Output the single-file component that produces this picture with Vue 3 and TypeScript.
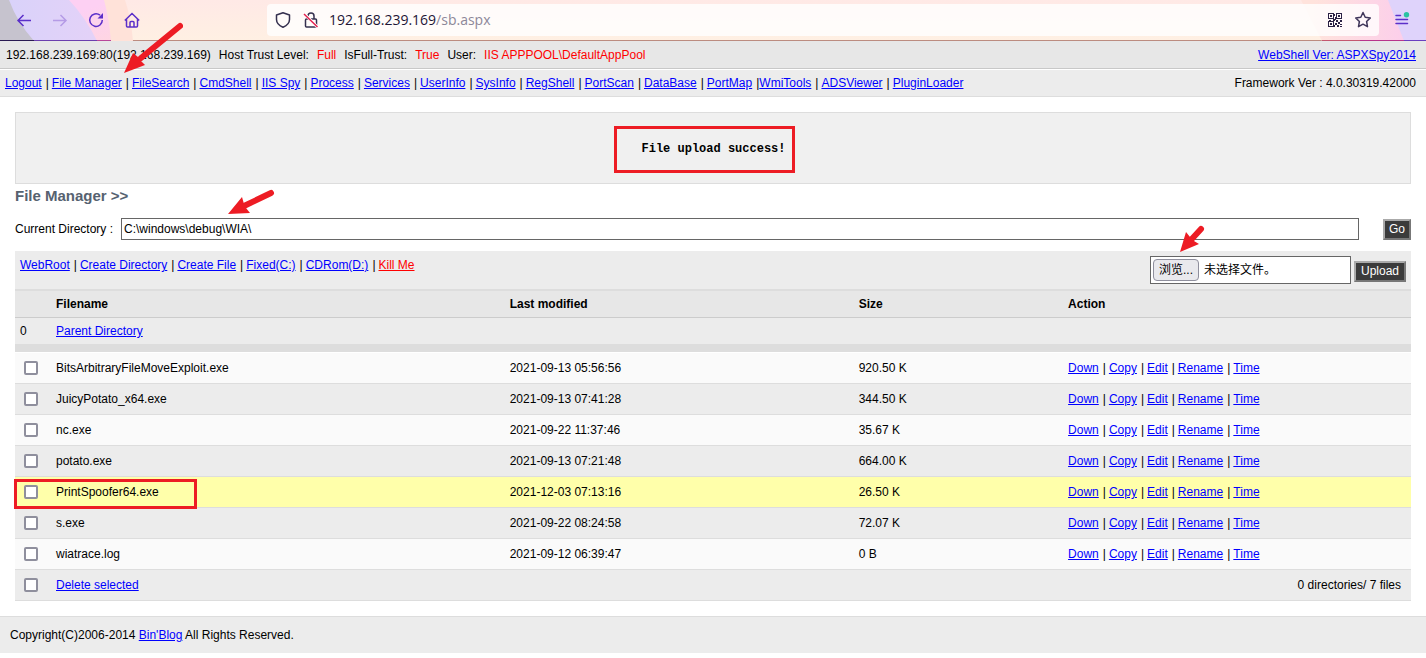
<script setup lang="ts">
import { ref } from 'vue'

interface FileRow {
  name: string
  modified: string
  size: string
  marked?: boolean
}

const menu: string[] = [
  'Logout', 'File Manager', 'FileSearch', 'CmdShell', 'IIS Spy', 'Process', 'Services', 'UserInfo',
  'SysInfo', 'RegShell', 'PortScan', 'DataBase', 'PortMap', 'WmiTools', 'ADSViewer', 'PluginLoader',
]
const shortcuts: string[] = ['WebRoot', 'Create Directory', 'Create File', 'Fixed(C:)', 'CDRom(D:)', 'Kill Me']
const actions: string[] = ['Down', 'Copy', 'Edit', 'Rename', 'Time']
const files: FileRow[] = [
  { name: 'BitsArbitraryFileMoveExploit.exe', modified: '2021-09-13 05:56:56', size: '920.50 K' },
  { name: 'JuicyPotato_x64.exe', modified: '2021-09-13 07:41:28', size: '344.50 K' },
  { name: 'nc.exe', modified: '2021-09-22 11:37:46', size: '35.67 K' },
  { name: 'potato.exe', modified: '2021-09-13 07:21:48', size: '664.00 K' },
  { name: 'PrintSpoofer64.exe', modified: '2021-12-03 07:13:16', size: '26.50 K', marked: true },
  { name: 's.exe', modified: '2021-09-22 08:24:58', size: '72.07 K' },
  { name: 'wiatrace.log', modified: '2021-09-12 06:39:47', size: '0 B' },
]
const directory = ref('C:\\windows\\debug\\WIA\\')
</script>

<template>
  <div class="page">
    <header class="chrome">
      <svg class="theme theme-left" width="160" height="41" viewBox="0 0 160 41" aria-hidden="true">
        <defs>
          <linearGradient id="lav" x1="0" x2="1"><stop offset="0" stop-color="#d8d2fa" /><stop offset="1" stop-color="#e4d2f8" /></linearGradient>
          <linearGradient id="pink" x1="0" x2="1" y1="0" y2="1"><stop offset="0.5" stop-color="#fdd0f3" /><stop offset="1" stop-color="#ffd6e2" /></linearGradient>
        </defs>
        <path d="M0 0H125Q131 18 133 41H0Z" fill="#ffe2d9" />
        <path d="M0 0H104Q109 18 111 41H0Z" fill="url(#pink)" />
        <path d="M0 0H69Q86 18 97 41H0Z" fill="url(#lav)" />
        <path d="M0 0H9Q17 22 34 41H0Z" fill="#c6c3ce" />
        <path d="M0 40.500H34" stroke="#2a1a52" stroke-width="1" />
        <path d="M34 40.500H97" stroke="#6b3fae" stroke-width="1" />
        <path d="M97 40.500H111" stroke="#b8479a" stroke-width="1" />
      </svg>
      <svg class="theme theme-right" width="136" height="41" viewBox="0 0 136 41" aria-hidden="true">
        <defs>
          <linearGradient id="dusk" x1="0" x2="1"><stop offset="0.100" stop-color="#ffe3dc" /><stop offset="0.800" stop-color="#fccfea" /></linearGradient>
        </defs>
        <path d="M11 0H136V41H32Z" fill="url(#dusk)" />
        <path d="M98 0H136V41H114Z" fill="#dfd3fb" />
        <path d="M32 40.500H70" stroke="#c4576f" stroke-width="1" />
        <path d="M70 40.500H114" stroke="#b8358c" stroke-width="1" />
        <path d="M114 40.500H136" stroke="#6a3fc0" stroke-width="1" />
      </svg>
      <nav class="chrome-nav">
        <button type="button" aria-label="Back">
          <svg width="16" height="16" viewBox="0 0 16 16"><path d="M15 8.500H2M7.500 3L2 8.500l5.500 5.500" stroke="#5b2fc9" /></svg>
        </button>
        <button type="button" aria-label="Forward">
          <svg width="16" height="16" viewBox="0 0 16 16"><path d="M1 8.500h13M8.500 3L14 8.500 8.500 14" stroke="#b59be6" /></svg>
        </button>
        <button type="button" aria-label="Reload">
          <svg width="16" height="16" viewBox="0 0 16 16"><path d="M12 3.200A6.300 6.300 0 1 0 14.300 8" stroke="#5b2fc9" /><path d="M15 1v5.500H9.500z" fill="#5b2fc9" /></svg>
        </button>
        <button type="button" aria-label="Home">
          <svg width="16" height="16" viewBox="0 0 16 16"><path d="M.8 8.500L8 1.500l7.200 7M2.500 7v7a1 1 0 0 0 1 1h9a1 1 0 0 0 1-1V7M6 15v-4.500a1 1 0 0 1 1-1h2a1 1 0 0 1 1 1V15" stroke="#5b2fc9" /></svg>
        </button>
      </nav>
      <div class="address">
        <svg width="16" height="16" viewBox="0 0 16 16" aria-hidden="true"><path d="M8 .8L14.500 3v4.500c0 3.500-2.500 6-6.500 7.800C4 13.500 1.500 11 1.500 7.500V3z" stroke="#35304f" stroke-linejoin="round" /></svg>
        <svg width="16" height="16" viewBox="0 0 16 16" aria-hidden="true"><path d="M5 7V4a3 3 0 0 1 6 0v3M3.500 7h9a1 1 0 0 1 1 1v6a1 1 0 0 1-1 1h-9a1 1 0 0 1-1-1V8a1 1 0 0 1 1-1z" stroke="#35304f" /><path d="M1.500 2L14.500 15" stroke="#fff" stroke-width="3" /><path d="M1 2L14.500 15" stroke="#e2204e" /></svg>
        <p class="url">192.168.239.169<span>/sb.aspx</span></p>
        <button type="button" aria-label="QR code">
          <svg width="14" height="14" viewBox="0 0 14 14" shape-rendering="crispEdges">
            <path d="M.5.5h5v5h-5zM8.500.5h5v5h-5zM.5 8.500h5v5h-5z" stroke="#2b2144" stroke-width="1" />
            <path d="M2 2h2v2H2zM10 2h2v2h-2zM2 10h2v2H2zM6 1h1v2H6zM7 4h1v3H7zM1 7h2v1H1zM5 6h2v2H5zM8 7h2v2H8zM12 7h2v2h-2zM10 9h2v2h-2zM7 10h2v2H7zM12 11h2v1h-2zM9 12h2v2H9zM12 13h2v1h-2zM6 12h1v2H6z" fill="#2b2144" />
          </svg>
        </button>
        <button type="button" aria-label="Bookmark">
          <svg width="18" height="18" viewBox="0 0 18 18"><path d="M9 1.500l2.200 4.700 5.100.7-3.700 3.600.9 5.200L9 13.200l-4.500 2.500.9-5.200L1.700 6.900l5.100-.7z" stroke="#40365a" stroke-linejoin="round" /></svg>
        </button>
      </div>
      <button class="app-menu" type="button" aria-label="Application menu">
        <svg width="16" height="16" viewBox="0 0 16 16"><path d="M2 3.500h4.500M2 7.500h11.500M2 11.500h11.500" stroke="#5b2fc9" stroke-linecap="round" /><circle cx="12.500" cy="2.700" r="2.700" fill="#2ac3a2" /></svg>
      </button>
    </header>

    <div class="bar status">
      <p>
        <span>192.168.239.169:80(192.168.239.169)</span>
        <span>Host Trust Level:</span><em>Full</em>
        <span>IsFull-Trust:</span><em>True</em>
        <span>User:</span><em>IIS APPPOOL\DefaultAppPool</em>
      </p>
      <a href="#">WebShell Ver: ASPXSpy2014</a>
    </div>
    <div class="bar menu">
      <nav class="links">
        <template v-for="(item, i) in menu" :key="item">
          <i v-if="i" :class="{ tight: item === 'WmiTools' }">|</i><a href="#">{{ item }}</a>
        </template>
      </nav>
      <span>Framework Ver : 4.0.30319.42000</span>
      <svg class="arrow arrow-menu" width="62" height="54" viewBox="0 0 62 54" aria-hidden="true">
        <path d="M59 5L20 37" /><polygon points="3,52 12,32 17,36 20,40 24,44" />
      </svg>
    </div>

    <main>
      <div class="message"><strong>File upload success!</strong></div>
      <h2>File Manager &gt;&gt;</h2>
      <form class="directory" @submit.prevent>
        <label for="dir">Current Directory :</label>
        <input id="dir" v-model="directory" type="text">
        <button class="dark go" type="submit">Go</button>
        <svg class="arrow arrow-dir" width="50" height="28" viewBox="0 0 50 28" aria-hidden="true">
          <path d="M45 5L18 18" /><polygon points="2,26 16,9 18,16 20,20 24,25" />
        </svg>
      </form>

      <form class="tools" @submit.prevent>
        <nav class="links">
          <template v-for="(item, i) in shortcuts" :key="item">
            <i v-if="i">|</i><a href="#" :class="{ danger: item === 'Kill Me' }">{{ item }}</a>
          </template>
        </nav>
        <div class="upload">
          <label class="picker">
            <input type="file"><span class="browse">浏览...</span><span>未选择文件。</span>
          </label>
          <button class="dark send" type="submit">Upload</button>
          <svg class="arrow arrow-upload" width="28" height="30" viewBox="0 0 28 30" aria-hidden="true">
            <path d="M23 5L12 17" /><polygon points="2,28 8,8 12,13 16,17 21,20" />
          </svg>
        </div>
      </form>

      <table>
        <colgroup><col class="c-pick"><col class="c-name"><col class="c-date"><col class="c-size"><col></colgroup>
        <thead>
          <tr><th></th><th>Filename</th><th>Last modified</th><th>Size</th><th>Action</th></tr>
        </thead>
        <tbody>
          <tr class="parent"><td>0</td><td colspan="4"><a href="#">Parent Directory</a></td></tr>
          <tr v-for="f in files" :key="f.name" class="file" :class="{ marked: f.marked }">
            <td class="pick"><input type="checkbox" :aria-label="f.name"><span v-if="f.marked" class="frame"></span></td>
            <td>{{ f.name }}</td>
            <td>{{ f.modified }}</td>
            <td>{{ f.size }}</td>
            <td>
              <span class="links">
                <template v-for="(a, i) in actions" :key="a"><i v-if="i">|</i><a href="#">{{ a }}</a></template>
              </span>
            </td>
          </tr>
        </tbody>
        <tfoot>
          <tr>
            <td class="pick"><input type="checkbox" aria-label="Select all"></td>
            <td><a href="#">Delete selected</a></td>
            <td colspan="3" class="total">0 directories/ 7 files</td>
          </tr>
        </tfoot>
      </table>
    </main>

    <footer>Copyright(C)2006-2014 <a href="#">Bin'Blog</a> All Rights Reserved.</footer>
  </div>
</template>

<style>
body {
  margin: 0;
  background: #fff;
}
</style>

<style scoped>
.page {
  font: 12px/18px "Liberation Sans", "Noto Sans CJK SC", sans-serif;
  color: #000;
}
.page * {
  box-sizing: border-box;
}
p,
h2 {
  margin: 0;
}
a {
  color: #00f;
}
button,
input {
  font: inherit;
}
svg {
  display: block;
  fill: none;
  stroke-width: 1.5;
}

.chrome {
  position: relative;
  display: flex;
  align-items: center;
  height: 41px;
  padding: 0 16px;
  background: linear-gradient(#ffe9e6, #fff0e3);
  border-bottom: 1px solid #bc8c80;
}
.chrome button {
  padding: 0;
  border: 0;
  background: none;
}
.theme {
  position: absolute;
  top: 0;
}
.theme-left {
  left: 0;
}
.theme-right {
  right: 0;
}
.chrome-nav {
  position: relative;
  display: flex;
  gap: 20px;
  width: 251px;
}
.address {
  position: relative;
  flex: 1;
  display: flex;
  align-items: center;
  gap: 12px;
  height: 32px;
  padding: 0 7px 0 8px;
  border-radius: 4px;
  background: rgba(255, 255, 255, 0.8);
}
.url {
  flex: 1;
  margin-left: -2px;
  font: 14px/20px "Open Sans", "Noto Sans", sans-serif;
  color: #1d1535;
}
.url span {
  color: #8d8799;
}
.app-menu {
  position: relative;
  margin-left: 15px;
}

.bar {
  position: relative;
  display: flex;
  justify-content: space-between;
  align-items: center;
  height: 28px;
  padding: 0 10px 0 5px;
}
.status {
  padding-left: 6px;
  background: #e7e7e7;
  border-bottom: 1px solid #c8c8c8;
}
.status p {
  display: flex;
  gap: 8px;
}
.status em {
  font-style: normal;
  color: #f00;
}
.menu {
  margin-top: 1px;
  height: 27px;
  background: #ececec;
  border-bottom: 1px solid #ddd;
}
.links {
  display: flex;
}
.links i {
  font-style: normal;
  margin: 0 3px 0 4px;
}
.links .tight {
  margin-right: 0;
}

.arrow {
  position: absolute;
  z-index: 2;
  pointer-events: none;
}
.arrow path {
  stroke: #ed1c24;
  stroke-width: 6;
  stroke-linecap: round;
}
.arrow polygon {
  fill: #ed1c24;
}
.arrow-menu {
  left: 121px;
  top: -49px;
}
.arrow-dir {
  left: 211px;
  top: -30px;
}
.arrow-upload {
  left: 28px;
  top: -32px;
}

main {
  padding: 15px 15px 0;
}
.message {
  display: flex;
  justify-content: center;
  padding: 13px 18px 10px 0;
  border: 1px solid #ddd;
  background: #f0f0f0;
}
.message strong {
  width: 181px;
  height: 47px;
  padding: 11px 0 0 25px;
  border: 3px solid #ed1c24;
  font: bold 12px/18px "Liberation Mono", monospace;
  white-space: nowrap;
}
h2 {
  padding-top: 2px;
  font-size: 15px;
  line-height: 20px;
  color: #566270;
}
.directory {
  position: relative;
  display: flex;
  align-items: center;
  margin: 12px 0 11px;
}
.directory label {
  width: 106px;
}
.directory input {
  flex: 1;
  min-width: 0;
  height: 22px;
  margin-right: 24px;
  padding: 0 2px;
  border: 1px solid #666;
  background: #fff;
}
.dark {
  height: 21px;
  padding: 0;
  border: 2px solid;
  border-color: #aaa #777 #777 #aaa;
  background: #3b3b3b;
  color: #fff;
  line-height: 16px;
}
.go {
  width: 28px;
}
.send {
  width: 52px;
  margin-top: 2px;
}
.tools {
  display: flex;
  justify-content: space-between;
  padding: 5px;
  background: #ececec;
}
.tools .links {
  align-items: flex-start;
}
.danger {
  color: #f00;
}
.upload {
  position: relative;
  display: flex;
  align-items: center;
  gap: 3px;
}
.picker {
  display: flex;
  align-items: center;
  gap: 5px;
  width: 201px;
  height: 28px;
  padding: 2px;
  border: 1px solid #666;
  background: #fff;
}
.picker input {
  position: absolute;
  width: 1px;
  height: 1px;
  opacity: 0;
}
.browse {
  height: 22px;
  padding: 0 5px;
  line-height: 20px;
  border: 1px solid #8f8f9d;
  border-radius: 4px;
  background: #e9e9ed;
}

table {
  width: 100%;
  table-layout: fixed;
  border-collapse: separate;
  border-spacing: 0;
}
.c-pick {
  width: 36px;
}
.c-name {
  width: 32.5%;
}
.c-date {
  width: 25%;
}
.c-size {
  width: 15%;
}
th,
td {
  height: 31px;
  padding: 0 5px;
  text-align: left;
  border-bottom: 1px solid #ddd;
  background: #ececec;
}
th {
  height: 29px;
  border-top: 2px solid #ddd;
  border-bottom-color: #ccc;
  background: #e7e7e7;
}
.parent td {
  height: 34px;
  border-bottom: 8px solid #ddd;
}
.file:nth-child(even) td {
  background: #fafafa;
}
.parent + .file td {
  height: 32px;
  border-top: 1px solid #fff;
}
.file.marked td {
  background: #ffffaa;
}
.pick {
  position: relative;
  padding-left: 9px;
}
.pick input {
  appearance: none;
  display: block;
  width: 14px;
  height: 14px;
  margin: 0;
  border: 2px solid #8f8f9d;
  border-radius: 2px;
  background: #fff;
}
.frame {
  position: absolute;
  z-index: 1;
  left: -1px;
  top: 2px;
  width: 183px;
  height: 30px;
  border: 3px solid #ed1c24;
}
.total {
  padding-right: 10px;
  text-align: right;
}
footer {
  margin-top: 15px;
  padding: 9px 10px;
  border-top: 1px solid #ddd;
  background: #ececec;
}
</style>
